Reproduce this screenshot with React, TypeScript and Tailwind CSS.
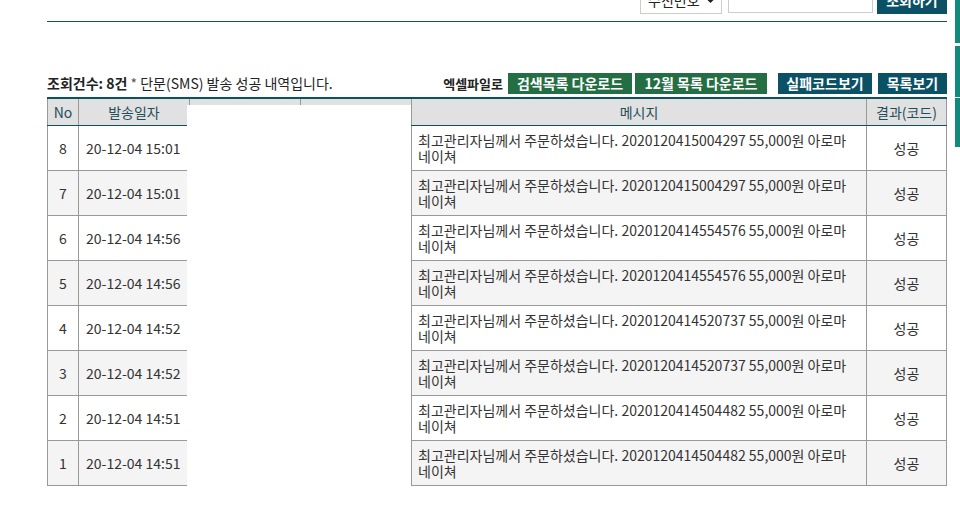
import React from "react";

const rows = [
  { no: 8, date: "20-12-04 15:01", code: "2020120415004297" },
  { no: 7, date: "20-12-04 15:01", code: "2020120415004297" },
  { no: 6, date: "20-12-04 14:56", code: "2020120414554576" },
  { no: 5, date: "20-12-04 14:56", code: "2020120414554576" },
  { no: 4, date: "20-12-04 14:52", code: "2020120414520737" },
  { no: 3, date: "20-12-04 14:52", code: "2020120414520737" },
  { no: 2, date: "20-12-04 14:51", code: "2020120414504482" },
  { no: 1, date: "20-12-04 14:51", code: "2020120414504482" },
];

const grid = "grid grid-cols-[31px_111px_111px_111px_455px_81px]";

export default function App() {
  return (
    <div className="relative w-[960px] h-[510px] overflow-hidden bg-white text-[#333] font-['Noto_Sans_CJK_KR','Noto_Sans',sans-serif]">
      {/* right floating quick tabs */}
      <div className="absolute right-0 top-0 w-[5px] flex flex-col">
        <div className="h-[43px] bg-[#0f8a7c]" />
        <div className="h-[51px] mt-[3px] bg-[#0f8a7c]" />
        <div className="h-[49px] mt-[1px] bg-[#0f8a7c]" />
      </div>

      <div className="ml-[47px] w-[900px]">
        {/* top search bar (mostly scrolled out of view) */}
        <div className="h-[22px] border-b border-[#1d4f57]">
          <div className="flex justify-end items-end h-[14px]">
            <div className="w-[82px] h-[28px] border border-[#ccc] bg-white flex items-center justify-between px-[7px] text-[14px] text-[#222]">
              <span>수신번호</span>
              <svg width="11" height="8" viewBox="0 0 11 8" className="mr-[-2px]">
                <path d="M1.5 1.5 L5.5 5.5 L9.5 1.5" stroke="#222" strokeWidth="2.2" fill="none" />
              </svg>
            </div>
            <div className="ml-[6px] w-[145px] h-[27px] mb-[1px] border border-[#ccc] bg-white" />
            <div className="ml-[4px] w-[70px] h-[28px] bg-[#0b5166] text-white text-[14px] font-bold flex items-center justify-center">
              조회하기
            </div>
          </div>
        </div>

        {/* info row */}
        <div className="mt-[51px] flex items-center justify-between h-[21px]">
          <div className="text-[14px] text-[#222]">
            <span className="font-bold">조회건수: 8건</span>
            <span className="text-[#555]"> * </span>
            <span>단문(SMS) 발송 성공 내역입니다.</span>
          </div>
          <div className="flex items-center text-[14px]">
            <span className="font-bold text-[13px] text-[#222] mr-[5px]">엑셀파일로</span>
            <button className="w-[124px] h-[21px] bg-[#236f43] text-white font-bold flex items-center justify-center">
              검색목록 다운로드
            </button>
            <button className="ml-[3px] w-[132px] h-[21px] bg-[#236f43] text-white font-bold flex items-center justify-center">
              12월 목록 다운로드
            </button>
            <button className="ml-[11px] w-[94px] h-[21px] bg-[#0b5166] text-white font-bold flex items-center justify-center">
              실패코드보기
            </button>
            <button className="ml-[6px] w-[69px] h-[21px] bg-[#0b5166] text-white font-bold flex items-center justify-center">
              목록보기
            </button>
          </div>
        </div>

        {/* table */}
        <div className="mt-[3px] border-t-2 border-[#0b5266]">
          <div className={`${grid} h-[27px] bg-[#e1e1e1] border-b border-[#0b5266] text-[14px] text-[#1f4d5c]`}>
            <div className="border-l border-[#999] flex items-center justify-center">No</div>
            <div className="border-l border-[#999] flex items-center justify-center">발송일자</div>
            <div className="border-l border-[#999]" />
            <div className="border-l border-[#999]" />
            <div className="border-l border-[#999] flex items-center justify-center">메시지</div>
            <div className="border-l border-r border-[#999] flex items-center justify-center">결과(코드)</div>
          </div>
          {rows.map((r, i) => (
            <div
              key={r.no}
              className={`${grid} h-[45px] border-b border-[#999] text-[14px] text-[#333] ${i % 2 === 1 ? "bg-[#f4f4f4]" : "bg-white"}`}
            >
              <div className="border-l border-[#999] flex items-center justify-center">{r.no}</div>
              <div className="border-l border-[#999] flex items-center pl-[7px] whitespace-nowrap">{r.date}</div>
              <div className="border-l border-[#999]" />
              <div className="border-l border-[#999]" />
              <div className="border-l border-[#999] flex items-center pl-[6px] leading-[16px]">
                <span>
                  최고관리자님께서 주문하셨습니다. {r.code} 55,000원 아로마
                  <br />
                  네이쳐
                </span>
              </div>
              <div className="border-l border-r border-[#999] flex items-center justify-center">성공</div>
            </div>
          ))}
        </div>
      </div>

      {/* redaction overlay */}
      <div className="absolute left-[187px] top-[105px] w-[224px] h-[390px] bg-white" />
    </div>
  );
}
